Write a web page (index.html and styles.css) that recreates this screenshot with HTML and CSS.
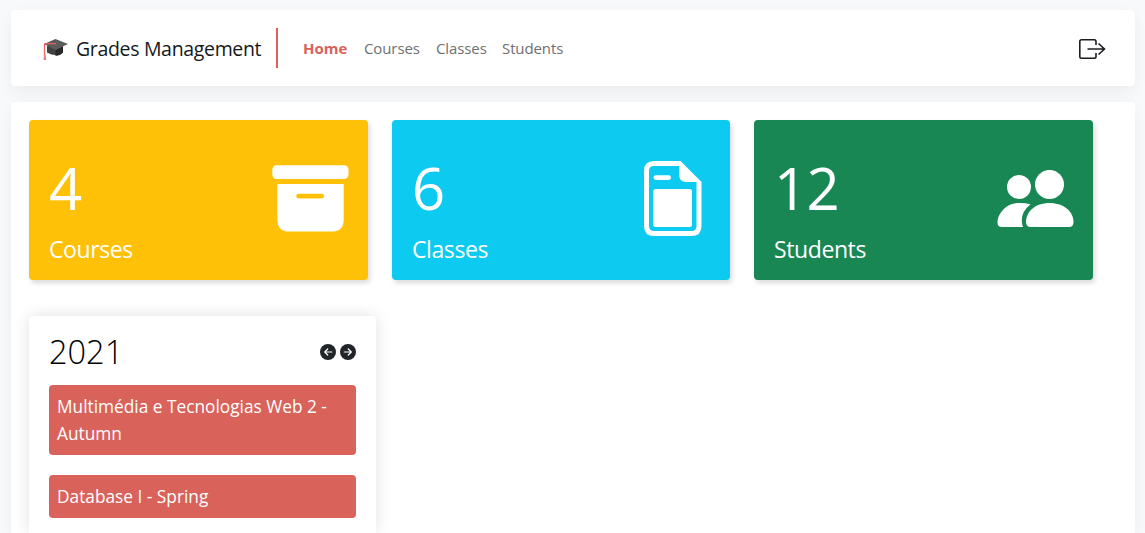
FILE: index.html
```html
<!DOCTYPE html>
<html lang="en">
<head>
<meta charset="utf-8">
<title>Grades Management</title>
<link rel="stylesheet" href="styles.css">
</head>
<body>
<header class="navbar">
  <a class="brand">
    <svg class="brand-icon" width="26" height="24" viewBox="0 0 26 24">
      <path d="M4 8v6.500q9 5 16 0V8z" fill="#414141"/>
      <path d="M12.500 11v7q5-.5 7.500-3.500V9z" fill="#292929"/>
      <path d="M12.500 1 25 6 12.500 12 1 6z" fill="#5c5c5c"/>
      <path d="M13 5.600H2.300q-.8 0-.8 1V18" fill="none" stroke="#e06661" stroke-width="1.300"/>
      <path d="M1 16.500h1.400l1 5.500H.5z" fill="#e9827e"/>
    </svg>
    <span class="brand-name">Grades Management</span>
  </a>
  <nav class="menu">
    <a class="link home">Home</a>
    <a class="link courses">Courses</a>
    <a class="link classes">Classes</a>
    <a class="link students">Students</a>
  </nav>
  <svg class="logout" width="28" height="22" viewBox="0 0 28 22" fill="none" stroke="#1b1b22" stroke-width="1.600">
    <path d="M18 7V3.500Q18 1.800 16.300 1.800H3.500Q1.800 1.800 1.800 3.500V18.500Q1.800 20.200 3.500 20.200H16.300Q18 20.200 18 18.500V15M9.500 11H26.500M20.500 5.500 26.500 11 20.500 16.500"/>
  </svg>
</header>
<main class="panel">
  <section class="stats">
    <article class="stat yellow">
      <div><div class="number">4</div><div class="label">Courses</div></div>
      <svg class="archive" width="77" height="67" viewBox="0 0 77 67">
        <rect x=".3" y=".3" width="76.200" height="13.700" rx="4.500" fill="#fff"/>
        <path d="M5.300 19H71.700V54.500Q71.700 66.600 59.700 66.600H17.300Q5.300 66.600 5.300 54.500Z" fill="#fff"/>
        <rect x="24.300" y="28.700" width="27.700" height="4.900" rx="2.400" fill="#ffc107"/>
      </svg>
    </article>
    <article class="stat cyan">
      <div><div class="number">6</div><div class="label">Classes</div></div>
      <svg class="file" width="58" height="75" viewBox="0 0 58 75">
        <path d="M37 2.500H10Q2.500 2.500 2.500 10V65Q2.500 72.500 10 72.500H47.500Q55 72.500 55 65V20.500" fill="none" stroke="#fff" stroke-width="5"/>
        <path d="M36.500 0 57.500 21H42Q35.300 21 35.300 14.500V0z" fill="#fff"/>
        <rect x="9.500" y="14.200" width="17.500" height="4.800" rx="2.400" fill="#fff"/>
        <rect x="9.300" y="28" width="38.700" height="38" rx="2.500" fill="#fff"/>
      </svg>
    </article>
    <article class="stat green">
      <div><div class="number">12</div><div class="label">Students</div></div>
      <svg class="people" width="77" height="58" viewBox="0 0 77 58" fill="#fff">
        <circle cx="22" cy="16.900" r="12"/>
        <circle cx="52.500" cy="14.400" r="14.500"/>
        <path d="M33.500 34.300Q29.300 33.100 22 33.100C8 33.100.5 45 .5 52.500Q.5 57 5 57H26Q21.500 44 33.500 34.300z"/>
        <path d="M34 57Q29 57 29 52C29 42 38 33.100 52.500 33.100S76.500 42 76.500 52Q76.500 57 72 57z"/>
      </svg>
    </article>
  </section>
  <section class="year">
    <div class="year-head">
      <span class="year-title">2021</span>
      <div class="arrows">
        <svg width="16" height="16" viewBox="0 0 16 16"><circle cx="8" cy="8" r="8" fill="#212529"/><path d="M11.800 8H4.700M7.700 5 4.700 8l3 3" fill="none" stroke="#fff" stroke-width="1.200" stroke-linecap="round" stroke-linejoin="round"/></svg>
        <svg width="16" height="16" viewBox="0 0 16 16"><circle cx="8" cy="8" r="8" fill="#212529"/><path d="M4.200 8h7.100M8.300 5l3 3-3 3" fill="none" stroke="#fff" stroke-width="1.200" stroke-linecap="round" stroke-linejoin="round"/></svg>
      </div>
    </div>
    <div class="course">Multimédia e Tecnologias Web 2 - Autumn</div>
    <div class="course">Database I - Spring</div>
  </section>
</main>
</body>
</html>
```

FILE: styles.css
```css
* { box-sizing: border-box; }
body {
  margin: 0;
  padding: 10px 10px 0 11px;
  height: 533px;
  overflow: hidden;
  background: #f8f9fa;
  font-family: "Open Sans", "Noto Sans", sans-serif;
  color: #212529;
}
.navbar {
  display: flex;
  align-items: center;
  height: 76px;
  padding: 0 29px 0 32px;
  background: #fff;
  border-radius: 4px;
  box-shadow: 0 8px 16px rgba(0, 0, 40, .04), 0 0 16px rgba(0, 0, 40, .02);
}
.brand {
  display: flex;
  align-items: center;
  width: 235px;
  height: 40px;
  border-right: 2px solid #d9625b;
}
.brand-icon { margin-top: 3px; }
.brand-name {
  margin: 2px 0 0 7px;
  font-size: 19.5px;
  line-height: 30px;
  letter-spacing: -.33px;
  white-space: nowrap;
  color: #16181b;
}
.menu { display: flex; margin-left: 25px; font-size: 15px; line-height: 24px; }
.link { white-space: nowrap; color: #707070; }
.home { width: 61px; color: #d9625b; font-weight: 700; }
.link.courses { width: 72px; letter-spacing: -.1px; }
.link.classes { width: 66px; letter-spacing: -.1px; }
.link.students { letter-spacing: -.1px; }
.logout { margin: 2px 0 0 auto; }
.panel {
  height: 431px;
  margin-top: 16px;
  padding: 18px 18px 0;
  overflow: hidden;
  background: #fff;
  border-radius: 4px 4px 0 0;
  box-shadow: 0 8px 16px rgba(0, 0, 40, .04), 0 0 16px rgba(0, 0, 40, .02);
}
.stats { display: grid; grid-template-columns: 339px 338px 339px; gap: 24px; }
.stat {
  display: flex;
  justify-content: space-between;
  align-items: flex-start;
  height: 160px;
  padding: 0 19px 0 20px;
  border-radius: 4px;
  color: #fff;
  box-shadow: 2px 3px 5px rgba(0, 0, 0, .15);
}
.yellow { background: #ffc107; }
.cyan { background: #0dcaf0; }
.green { background: #198754; }
.number { padding-top: 33px; font-size: 58px; line-height: 70px; letter-spacing: -.6px; }
.label { margin-top: 8px; font-size: 23px; line-height: 36px; letter-spacing: -.4px; white-space: nowrap; }
.archive { margin-top: 45px; }
.file { margin: 41px 9px 0 0; }
.people { margin-top: 50px; }
.year {
  width: 347px;
  height: 217px;
  margin-top: 36px;
  padding: 16px 20px 0;
  border-radius: 4px 4px 0 0;
  box-shadow: 0 0 16px rgba(0, 0, 0, .12);
}
.year-head { display: flex; justify-content: space-between; align-items: center; height: 40px; margin-bottom: 13px; }
.year-title { font-size: 32.5px; line-height: 40px; color: #000; font-weight: 300; }
.arrows { display: flex; gap: 4px; }
.course {
  margin-bottom: 20px;
  padding: 8px;
  border-radius: 4px;
  background: #d9625b;
  color: #fff;
  font-size: 17.3px;
  line-height: 27px;
}
.course:last-child { margin-bottom: 0; }
```
